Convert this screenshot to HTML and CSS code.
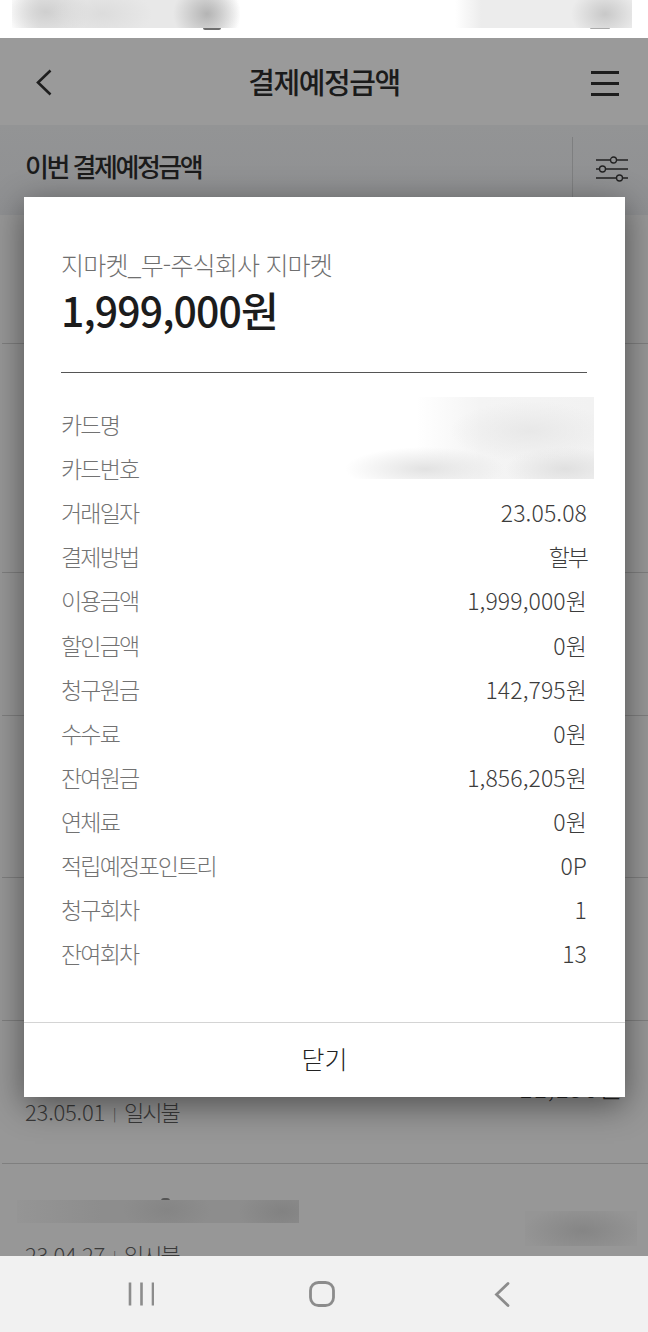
FILE: index.html
```html
<!DOCTYPE html>
<html lang="ko">
<head>
    <meta charset="UTF-8">
    <meta name="viewport" content="width=device-width, initial-scale=1.0">
    <title>결제예정금액</title>
    <link rel="stylesheet" href="styles.css">
</head>
<body>

    <div class="status">
        <div class="smudge smudge-left"></div>
        <div class="smudge smudge-right"></div>
        <div class="smudge crumb crumb-left"></div>
        <div class="smudge crumb crumb-right"></div>
    </div>

    <div class="app">
        <header class="topbar">
            <svg class="icon-back" width="16" height="27" viewBox="0 0 16 27"><path d="M14.5 1.5 2 13.5l12.5 12" fill="none" stroke="#1e1e1e" stroke-width="2.6"/></svg>
            <h1>결제예정금액</h1>
            <div class="burger"><span></span><span></span><span></span></div>
        </header>

        <div class="subbar">
            <h2>이번 결제예정금액</h2>
            <div class="filter">
                <svg width="32" height="26" viewBox="0 0 32 26">
                    <g fill="none" stroke="#222" stroke-width="1.3">
                        <path d="M0 4h14M21 4h11M0 13h3M10 13h22M0 22h20M27 22h5"/>
                        <circle cx="17.500" cy="4" r="3"/>
                        <circle cx="6.500" cy="13" r="3"/>
                        <circle cx="23.500" cy="22" r="3"/>
                    </g>
                </svg>
            </div>
        </div>

        <div class="list">
            <div class="row row-a"></div>
            <div class="row row-b"></div>
            <div class="row row-c"></div>
            <div class="row row-d"></div>
            <div class="row row-c"></div>
            <div class="row row-c item">
                <div class="price">11,190원</div>
                <div class="meta">23.05.01 <i>|</i> <span class="kind">일시불</span></div>
            </div>
            <div class="row item item-last">
                <div class="meta">23.04.27 <i>|</i> <span class="kind">일시불</span></div>
            </div>
        </div>

        <div class="smudge crumb crumb-name"></div>
        <div class="smudge smudge-name"></div>
        <div class="smudge smudge-price"></div>

        <div class="modal">
            <div class="modal-body">
                <div class="modal-head">
                    <p class="store">지마켓_무-주식회사 지마켓</p>
                    <p class="total">1,999,000원</p>
                </div>
                <dl class="details">
                    <div><dt>카드명</dt><dd></dd></div>
                    <div><dt>카드번호</dt><dd></dd></div>
                    <div><dt>거래일자</dt><dd>23.05.08</dd></div>
                    <div><dt>결제방법</dt><dd class="kind">할부</dd></div>
                    <div><dt>이용금액</dt><dd>1,999,000원</dd></div>
                    <div><dt>할인금액</dt><dd>0원</dd></div>
                    <div><dt>청구원금</dt><dd>142,795원</dd></div>
                    <div><dt>수수료</dt><dd>0원</dd></div>
                    <div><dt>잔여원금</dt><dd>1,856,205원</dd></div>
                    <div><dt>연체료</dt><dd>0원</dd></div>
                    <div><dt>적립예정포인트리</dt><dd>0P</dd></div>
                    <div><dt>청구회차</dt><dd>1</dd></div>
                    <div><dt>잔여회차</dt><dd>13</dd></div>
                </dl>
                <div class="smudge smudge-card"></div>
            </div>
            <div class="modal-close">닫기</div>
        </div>
    </div>

    <nav class="softkeys">
        <svg width="26" height="24" viewBox="0 0 26 24"><path d="M2 0.500v23M13.500 0.500v23M25 0.500v23" fill="none" stroke="#8c8c8c" stroke-width="2.600"/></svg>
        <svg width="26" height="26" viewBox="0 0 26 26"><rect x="1.500" y="1.500" width="23" height="23" rx="8" fill="none" stroke="#8c8c8c" stroke-width="2.800"/></svg>
        <svg class="key-back" width="16" height="25" viewBox="0 0 16 25"><path d="M14 1.500 2.500 12.500 14 23.500" fill="none" stroke="#8c8c8c" stroke-width="2.800" stroke-linecap="round"/></svg>
    </nav>

</body>
</html>
```

FILE: styles.css
```css
* {
    box-sizing: border-box;
}

html, body {
    height: 100%;
}

body {
    margin: 0;
    display: flex;
    flex-direction: column;
    height: 1332px;
    overflow: hidden;
    font-family: "Noto Sans CJK KR", "Noto Sans", sans-serif;
    background: #fff;
    color: #1f1f1f;
}

.status {
    position: relative;
    height: 38px;
    flex: none;
    background: #fff;
}

.app {
    position: relative;
    flex: 1;
    overflow: hidden;
    background: #979797;
}

.topbar {
    display: flex;
    align-items: center;
    justify-content: space-between;
    height: 87px;
    padding: 0 29px 2px 36px;
    background: #9a9a9a;
}

.topbar h1 {
    margin: 0 0 0 5px;
    font-size: 29px;
    font-weight: 500;
    letter-spacing: -1.4px;
    color: #1b1b1b;
}

.icon-back {
    margin-top: 3px;
}

.burger {
    display: flex;
    flex-direction: column;
    gap: 8px;
    width: 28px;
    margin-top: 5px;
}

.burger span {
    display: block;
    height: 3px;
    background: #1e1e1e;
}

.subbar {
    display: flex;
    align-items: center;
    justify-content: space-between;
    height: 90px;
    padding: 12px 0 0 25px;
    background: linear-gradient(#939495, #8f9092);
}

.subbar h2 {
    margin: 0 0 22px;
    font-size: 26px;
    font-weight: 500;
    letter-spacing: -2.500px;
    color: #1b1b1b;
}

.filter {
    display: flex;
    justify-content: center;
    align-items: flex-start;
    align-self: flex-end;
    width: 76px;
    height: 78px;
    padding: 19px 0 0 3px;
    border-left: 1px solid #7e7f80;
}

.row {
    border-bottom: 1px solid #7f7f7f;
    margin-left: 2px;
}

.row-a { height: 129px; }
.row-b { height: 229px; }
.row-c { height: 143px; }
.row-d { height: 162px; }

.item {
    padding: 52px 25px 0 23px;
}

.item-last {
    padding-top: 76px;
}

.price {
    text-align: right;
    font-size: 26px;
    font-weight: 300;
    line-height: 28px;
    letter-spacing: 0.6px;
    color: #222;
}

.meta {
    font-size: 22px;
    font-weight: 300;
    line-height: 28px;
    letter-spacing: -0.2px;
    color: #3a3a3a;
}

.price + .meta {
    margin-top: -4px;
}

.meta i {
    font-style: normal;
    font-size: 13px;
    vertical-align: 2px;
    margin: 0 2px;
}

.meta .kind {
    letter-spacing: -2px;
}

.smudge {
    position: absolute;
}

.smudge-left {
    left: 12px;
    top: 0;
    width: 228px;
    height: 28px;
    background:
        radial-gradient(ellipse 34px 30px at 195px 14px, #b4b4b4, transparent),
        radial-gradient(ellipse 50px 26px at 90px 14px, #dcdcdc, transparent),
        radial-gradient(ellipse 44px 28px at 34px 12px, #cfcfcf, transparent),
        linear-gradient(90deg, transparent, #e8e8e8 12%, #e8e8e8 85%, transparent);
}

.smudge-right {
    left: 455px;
    top: 0;
    width: 177px;
    height: 28px;
    background:
        radial-gradient(ellipse 34px 26px at 150px 14px, #c8c8c8, transparent),
        linear-gradient(90deg, transparent, #ececec 15%, #ececec);
}

.crumb {
    background: #6e6e6e;
    border-radius: 0 0 4px 4px;
}

.crumb-left {
    left: 203px;
    top: 28px;
    width: 18px;
    height: 2px;
}

.crumb-right {
    left: 590px;
    top: 28px;
    width: 20px;
    height: 1px;
    background: #aaa;
}

.crumb-name {
    left: 161px;
    top: 1160px;
    width: 9px;
    height: 3px;
    border-radius: 4px 4px 0 0;
    background: #555;
}

.smudge-name {
    left: 17px;
    top: 1162px;
    width: 282px;
    height: 23px;
    background:
        radial-gradient(ellipse 44px 24px at 265px 12px, #828282, transparent),
        radial-gradient(ellipse 44px 24px at 150px 10px, #858585, transparent),
        linear-gradient(90deg, #959595, #8d8d8d 30%, #8d8d8d);
}

.smudge-price {
    left: 525px;
    top: 1173px;
    width: 112px;
    height: 35px;
    background:
        radial-gradient(ellipse 60px 26px at 58px 20px, #858585, transparent),
        #959595;
}

.modal {
    position: absolute;
    left: 24px;
    top: 159px;
    width: 601px;
    height: 900px;
    display: flex;
    flex-direction: column;
    background: #fff;
    box-shadow: 0 8px 32px rgba(0, 0, 0, 0.48);
}

.modal-body {
    position: relative;
    flex: 1;
    padding: 0 38px 0 37px;
}

.modal-head {
    height: 176px;
    padding-top: 49px;
    border-bottom: 1px solid #555;
}

.store {
    margin: 0;
    font-size: 25px;
    font-weight: 300;
    line-height: 36px;
    letter-spacing: -0.8px;
    color: #6f6f6f;
}

.total {
    margin: 0;
    font-size: 41px;
    font-weight: 500;
    line-height: 54px;
    letter-spacing: -0.9px;
    color: #1c1c1c;
}

.details {
    margin: 29px 0 0;
}

.details div {
    display: flex;
    justify-content: space-between;
    align-items: center;
    height: 44.100px;
    font-size: 23px;
    font-weight: 300;
}

.details dt {
    letter-spacing: -1.800px;
    color: #727272;
}

.details dd {
    margin: 0;
    letter-spacing: 0.1px;
    color: #3c3c3c;
}

.details dd.kind {
    letter-spacing: -2px;
}

.smudge-card {
    left: 316px;
    top: 200px;
    width: 254px;
    height: 82px;
    background:
        radial-gradient(ellipse 80px 22px at 85px 72px, #e2e2e2, transparent),
        radial-gradient(ellipse 80px 30px at 190px 34px, #e8e8e8, transparent),
        radial-gradient(ellipse 60px 22px at 225px 72px, #e0e0e0, transparent),
        linear-gradient(90deg, #fff, #fff 30%, #f4f4f4 55%, #f2f2f2);
}

.modal-close {
    height: 75px;
    border-top: 1px solid #d4d4d4;
    display: flex;
    align-items: center;
    justify-content: center;
    padding-bottom: 4px;
    font-size: 25px;
    font-weight: 300;
    color: #222;
}

.softkeys {
    flex: none;
    height: 76px;
    background: #f1f1f1;
    display: flex;
    align-items: center;
    justify-content: flex-start;
    gap: 155px;
    padding: 0 0 0 128px;
}

.key-back {
    margin-left: 4px;
}
```
